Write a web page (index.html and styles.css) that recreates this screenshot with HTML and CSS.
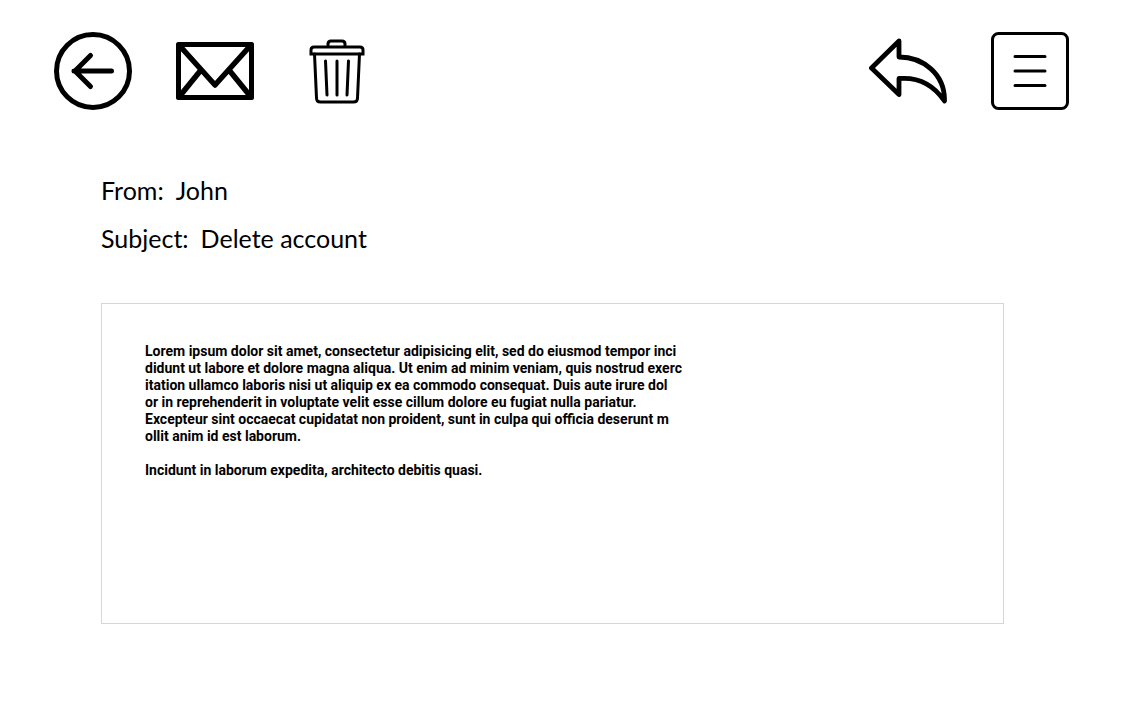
FILE: index.html
```
<!DOCTYPE html>
<html lang="en">
<head>
<meta charset="utf-8">
<meta name="viewport" content="width=device-width, initial-scale=1">
<title>Delete account</title>
<link rel="stylesheet" href="styles.css">
</head>
<body>
<header class="toolbar">
  <button class="tool" type="button" aria-label="Back">
    <svg class="icon" viewBox="0 0 78 78"><g stroke-width="5"><circle cx="39" cy="39" r="36.5"/><path d="M57.500 39H20M36.500 23.500L21 39 36.500 54.500"/><path fill="#000" stroke="none" d="M19 39l8-6v12z"/></g></svg>
  </button>
  <button class="tool" type="button" aria-label="Mark as unread">
    <svg class="icon" viewBox="0 0 78 78"><g stroke-width="5"><path d="M2.500 12.500h73v53h-73z"/><path stroke-width="5.500" d="M3 13L39 53 75 13M3 65L25 38M75 65L53 38"/></g></svg>
  </button>
  <button class="tool" type="button" aria-label="Delete">
    <svg class="icon" viewBox="0 0 78 78"><g stroke-width="3"><path d="M30 14v-2q0-3 3-3h11q3 0 3 3v2"/><path stroke-linejoin="miter" d="M13 22v-4q0-3 3-3h46q3 0 3 3v4z"/><path d="M16.500 22l2 44q0 4 4 4h33q4 0 4-4l2-44M27.500 29l1.500 34M39 29v34M50.500 29L49 63"/></g></svg>
  </button>
  <span class="spacer"></span>
  <button class="tool" type="button" aria-label="Reply">
    <svg class="icon" viewBox="0 0 78 78"><path stroke-width="4.800" d="M30 9L2.500 36 30 62.500V46.500C48 45 64 52 75.500 69C76 42 54 25 30 25Z"/></svg>
  </button>
  <button class="tool" type="button" aria-label="Menu">
    <svg class="icon" viewBox="0 0 78 78"><g stroke-width="3"><rect x="1.500" y="1.500" width="75" height="75" rx="6"/><path d="M24 24.500h30M24 39h30M24 53.500h30"/></g></svg>
  </button>
</header>
<main class="message">
  <dl class="fields">
    <div class="field"><dt>From:</dt><dd>John</dd></div>
    <div class="field"><dt>Subject:</dt><dd>Delete account</dd></div>
  </dl>
  <article class="body">
    <p class="text">Lorem ipsum dolor sit amet, consectetur adipisicing elit, sed do eiusmod tempor inci
didunt ut labore et dolore magna aliqua. Ut enim ad minim veniam, quis nostrud exerc
itation ullamco laboris nisi ut aliquip ex ea commodo consequat. Duis aute irure dol
or in reprehenderit in voluptate velit esse cillum dolore eu fugiat nulla pariatur.
Excepteur sint occaecat cupidatat non proident, sunt in culpa qui officia deserunt m
ollit anim id est laborum.</p>
    <p class="text">Incidunt in laborum expedita, architecto debitis quasi.</p>
  </article>
</main>
</body>
</html>
```
FILE: styles.css
```
* {
  box-sizing: border-box;
}

body {
  margin: 0;
  background: #fff;
  color: #000;
  font-family: Lato, sans-serif;
}

.toolbar {
  display: flex;
  gap: 44px;
  padding: 32px 61px 0 54px;
}

.tool {
  width: 78px;
  height: 78px;
  padding: 0;
  border: 0;
  background: none;
  cursor: pointer;
}

.icon {
  display: block;
  width: 100%;
  height: 100%;
  fill: none;
  stroke: #000;
  stroke-linecap: round;
  stroke-linejoin: round;
}

.spacer {
  flex: 1;
}

.message {
  padding: 56px 126px 0 101px;
}

.fields {
  display: grid;
  margin: 0 0 41px;
  font-size: 25px;
  line-height: 48px;
}

.field {
  display: flex;
  gap: 12px;
}

.field dd {
  margin: 0;
}

.body {
  min-height: 321px;
  padding: 39px 43px;
  border: 1px solid #d6d6d6;
}

.text {
  margin: 0 0 17px;
  font-family: Roboto, sans-serif;
  font-size: 14px;
  font-weight: 700;
  line-height: 17px;
  white-space: pre-line;
}
```
